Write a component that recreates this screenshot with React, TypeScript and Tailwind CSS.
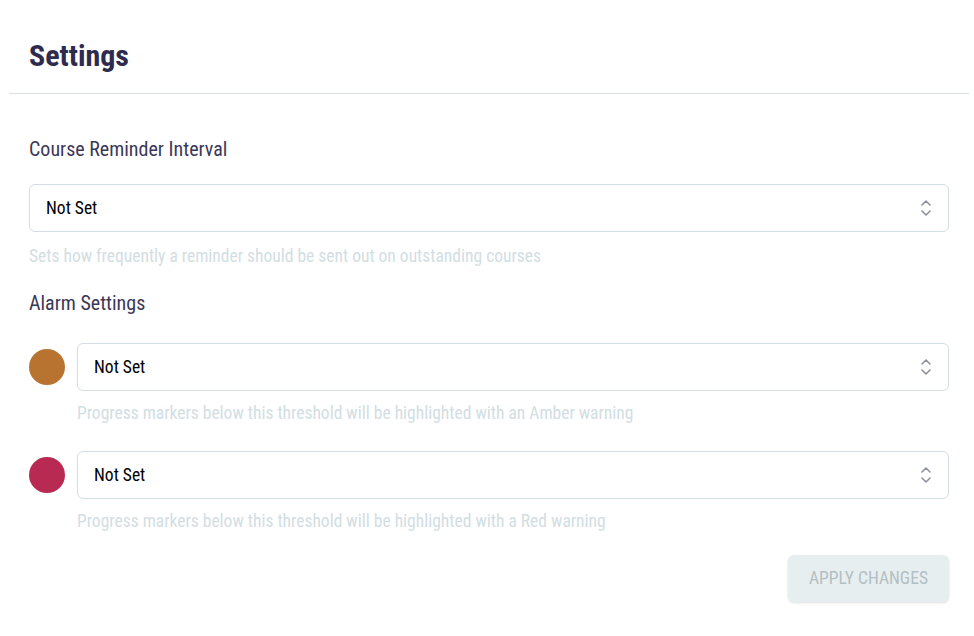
import React from 'react';

const font = { fontFamily: '"Roboto Condensed", Roboto, "Liberation Sans", sans-serif' };

const Chevrons = () => (
  <svg width="12" height="22" viewBox="0 0 12 22" fill="none" className="text-[#8b909c]">
    <path d="M2 8 L6 4 L10 8" stroke="currentColor" strokeWidth="1.6" strokeLinecap="round" strokeLinejoin="round" />
    <path d="M2 14 L6 18 L10 14" stroke="currentColor" strokeWidth="1.6" strokeLinecap="round" strokeLinejoin="round" />
  </svg>
);

const SelectBox = ({ value }: { value: string }) => (
  <div className="flex h-[48px] flex-1 items-center justify-between rounded-md border border-[#d3dee3] bg-white pl-4 pr-4">
    <span className="text-[17.5px] text-black">{value}</span>
    <Chevrons />
  </div>
);

const AlarmRow = ({ color, help }: { color: string; help: string }) => (
  <div>
    <div className="flex items-center gap-3">
      <div className={`h-9 w-9 shrink-0 rounded-full ${color}`} />
      <SelectBox value="Not Set" />
    </div>
    <p className="mt-[10px] pl-12 text-[17.5px] leading-6 text-[#d2dee3]">{help}</p>
  </div>
);

export default function App() {
  return (
    <div className="min-h-screen bg-white pl-[9px] pr-[5px] [font-stretch:condensed]" style={font}>
      <div className="px-5 pb-[19px] pt-[38px]">
        <h1 className="text-[30px] font-bold leading-9 text-[#2e2b4f]">Settings</h1>
      </div>
      <div className="border-t border-[#d8e2e6]" />
      <div className="px-5 pt-[41px]">
        <h2 className="text-[20px] leading-7 text-[#3b3857]">Course Reminder Interval</h2>
        <div className="mt-[21px] flex">
          <SelectBox value="Not Set" />
        </div>
        <p className="mt-[12px] text-[17.5px] leading-6 text-[#d2dee3]">
          Sets how frequently a reminder should be sent out on outstanding courses
        </p>
        <h2 className="mt-[21px] text-[20px] leading-7 text-[#3b3857]">Alarm Settings</h2>
        <div className="mt-[26px] flex flex-col gap-[26px]">
          <AlarmRow
            color="bg-[#b87330]"
            help="Progress markers below this threshold will be highlighted with an Amber warning"
          />
          <AlarmRow
            color="bg-[#b82a52]"
            help="Progress markers below this threshold will be highlighted with a Red warning"
          />
        </div>
        <div className="mt-[22px] flex justify-end">
          <button className="h-[47px] w-[161px] rounded-md bg-[#e7eef0] text-[17.5px] uppercase text-[#b3bfc3] shadow-sm">
            Apply Changes
          </button>
        </div>
      </div>
    </div>
  );
}
